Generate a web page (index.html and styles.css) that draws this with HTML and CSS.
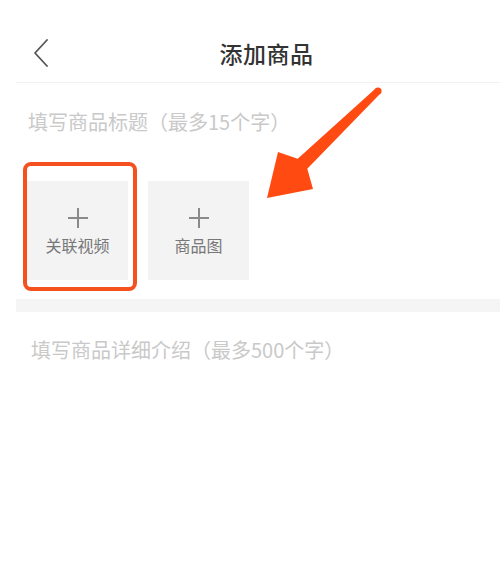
FILE: index.html
```html
<!DOCTYPE html>
<html lang="zh-CN">
<head>
<meta charset="UTF-8">
<meta name="viewport" content="width=device-width, initial-scale=1.0">
<title>添加商品</title>
<link rel="stylesheet" href="styles.css">
</head>
<body>

<div class="page">
  <div class="header">
    <a class="back" href="#">
      <svg width="16" height="28" viewBox="0 0 16 28"><path d="M14 1 L2 14 L14 27" fill="none" stroke="#555" stroke-width="1.8" stroke-linecap="round" stroke-linejoin="round"/></svg>
    </a>
    <h1>添加商品</h1>
    <span></span>
  </div>

  <div class="field title-field">填写商品标题（最多15个字）</div>

  <div class="media">
    <div class="tile marked">
      <span class="plus"></span>
      <span class="tile-label">关联视频</span>
    </div>
    <div class="tile">
      <span class="plus"></span>
      <span class="tile-label">商品图</span>
    </div>
  </div>

  <div class="band"></div>

  <div class="field desc-field">填写商品详细介绍（最多500个字）</div>

  <!-- annotation arrow over the page -->
  <svg class="arrow" width="500" height="576" viewBox="0 0 500 576">
    <polygon points="267,198 278,152 297.7,158.8 375.6,88.5 380.4,93.5 307.3,168.8 313,189" fill="#ff4b12"/>
    <circle cx="378" cy="91" r="3.6" fill="#ff4b12"/>
  </svg>
</div>

</body>
</html>
```

FILE: styles.css
```css
body {
  margin: 0;
  font-family: "Noto Sans CJK SC", "Noto Sans", sans-serif;
  background-color: #fff;
  color: #333;
}

.page {
  position: relative;
  width: 500px;
  height: 576px;
  overflow: hidden;
}

.header {
  display: grid;
  grid-template-columns: 1fr auto 1fr;
  align-items: center;
  height: 83px;
  margin-left: 16px;
  padding: 24px 0 0 17px;
  border-bottom: 1px solid #f1f1f1;
  box-sizing: border-box;
}

.back {
  display: flex;
  align-items: center;
}

.header h1 {
  margin: 0;
  font-size: 23px;
  font-weight: 500;
  color: #333;
  letter-spacing: 0.5px;
}

.field {
  font-size: 20px;
  line-height: 26px;
  color: #c9c9c9;
}

.title-field {
  padding: 26px 0 0 28px;
}

.media {
  display: flex;
  gap: 20px;
  padding: 46px 0 0 27px;
}

.tile {
  position: relative;
  width: 101px;
  height: 99px;
  background-color: #f3f3f3;
  display: flex;
  flex-direction: column;
  align-items: center;
  justify-content: center;
}

.marked::after {
  content: "";
  position: absolute;
  left: -4px;
  top: -19px;
  right: -9px;
  bottom: -11px;
  border: 4px solid #f4511e;
  border-radius: 8px;
}

.plus {
  position: relative;
  width: 20px;
  height: 20px;
  margin-top: 2px;
}

.plus::before,
.plus::after {
  content: "";
  position: absolute;
  background-color: #8a8a8a;
}

.plus::before {
  left: 0;
  right: 0;
  top: 9px;
  height: 2px;
}

.plus::after {
  top: 0;
  bottom: 0;
  left: 9px;
  width: 2px;
}

.tile-label {
  margin-top: 6px;
  font-size: 16px;
  line-height: 22px;
  color: #777;
}

.band {
  height: 13px;
  margin: 19px 0 0 16px;
  background-color: #f5f5f5;
}

.desc-field {
  padding: 25px 0 0 31px;
}

.arrow {
  position: absolute;
  left: 0;
  top: 0;
  pointer-events: none;
}
```
